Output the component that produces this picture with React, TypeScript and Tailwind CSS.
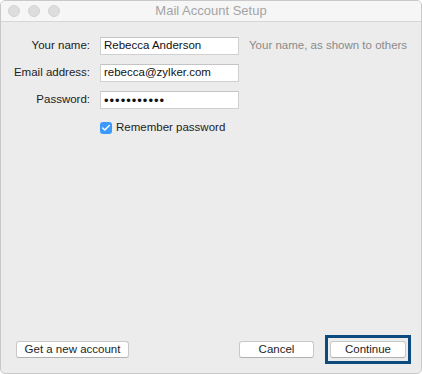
import { Check } from "lucide-react";

const fields = [
  { label: "Your name:", value: "Rebecca Anderson", hint: "Your name, as shown to others" },
  { label: "Email address:", value: "rebecca@zylker.com" },
  { label: "Password:", value: "•••••••••••", secret: true },
];

const Light = () => (
  <span className="w-[12px] h-[12px] rounded-full bg-[#dddddd] border border-[#d2d2d2]" />
);

const Btn = ({ children, w }: { children: string; w: string }) => (
  <button
    className={`${w} h-[17px] rounded-[3px] bg-white border border-[#c8c8c8] border-b-[#b0b0b0] text-[11.5px] leading-none text-[#1e1e1e] flex items-center justify-center`}
  >
    {children}
  </button>
);

export default function App() {
  return (
    <div className="w-[422px] h-[374px] bg-white font-['Liberation_Sans',Arial,sans-serif]">
      <div className="h-full flex flex-col rounded-[5px] border border-[#c9c9c9] bg-[#ececec] overflow-hidden">
        <div className="relative h-[21px] shrink-0 bg-[#f6f6f6] border-b border-[#d6d6d6] flex items-center">
          <div className="flex gap-[8px] pl-[7px]">
            <Light />
            <Light />
            <Light />
          </div>
          <div className="absolute inset-0 flex items-center justify-center text-[13px] text-[#a4a4a4]">
            Mail Account Setup
          </div>
        </div>

        <div className="flex-1 flex flex-col pt-[15px]">
          <div className="grid grid-cols-[89px_139px_auto] gap-x-[10px] gap-y-[9px] items-center text-[11.5px] text-[#222]">
            {fields.map((f) => (
              <div key={f.label} className="contents">
                <div className="text-right whitespace-nowrap">{f.label}</div>
                <div className="h-[18px] bg-white border border-[#d0d0d0] border-t-[#c4c4c4] flex items-center px-[3px] text-[#111]">
                  {f.secret ? (
                    <span className="text-[13px] tracking-[1px] leading-none">{f.value}</span>
                  ) : (
                    f.value
                  )}
                </div>
                <div className="text-[#8a8a8a] whitespace-nowrap">{f.hint ?? ""}</div>
              </div>
            ))}
            <div />
            <div className="flex items-center gap-[4px] whitespace-nowrap pt-[1px]">
              <span className="w-[12px] h-[12px] rounded-[3px] bg-[#3b99fc] flex items-center justify-center">
                <Check className="w-[10px] h-[10px] text-white" strokeWidth={3.5} />
              </span>
              Remember password
            </div>
          </div>

          <div className="mt-auto mb-[9px] flex items-center px-[15px]">
            <Btn w="w-[113px]">Get a new account</Btn>
            <div className="ml-auto flex items-center gap-[11px] mr-[-5px]">
              <Btn w="w-[75px]">Cancel</Btn>
              <div className="border-[3px] border-[#0d4a7d] px-[2px] py-[3px]">
                <Btn w="w-[76px]">Continue</Btn>
              </div>
            </div>
          </div>
        </div>
      </div>
    </div>
  );
}
